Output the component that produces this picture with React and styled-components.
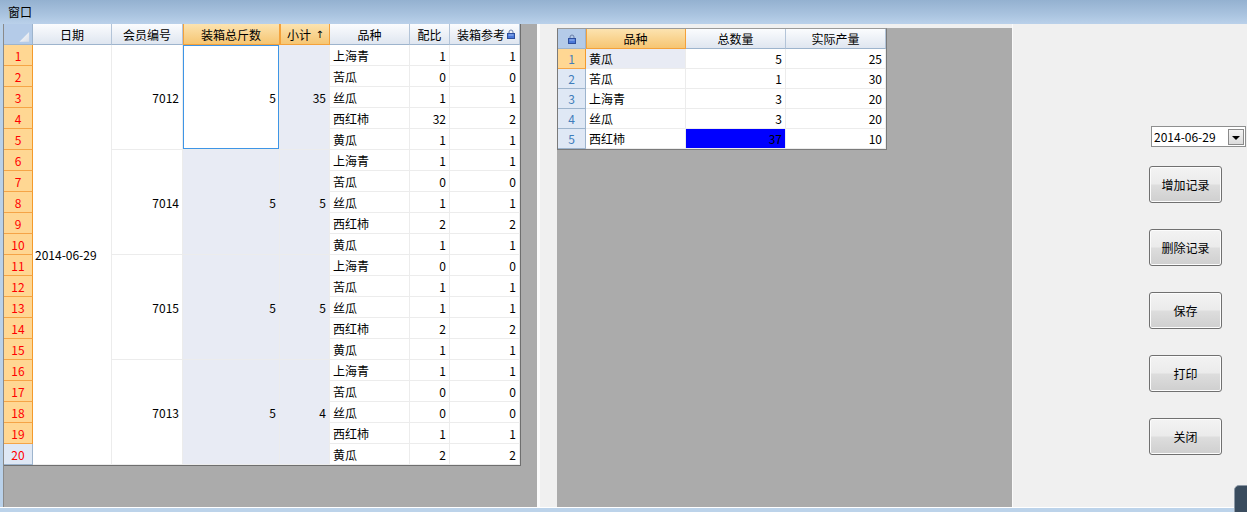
import React from "react";
import styled, { createGlobalStyle } from "styled-components";

const GlobalStyle = createGlobalStyle`
  body {
    margin: 0;
    font-family: "Noto Sans CJK SC", "DejaVu Sans", sans-serif;
    font-size: 12px;
    color: #000;
  }
`;

// data
const groups = [
  { member: "7012", box: 5, sum: 35, rows: [["上海青", 1, 1], ["苦瓜", 0, 0], ["丝瓜", 1, 1], ["西红柿", 32, 2], ["黄瓜", 1, 1]] },
  { member: "7014", box: 5, sum: 5, rows: [["上海青", 1, 1], ["苦瓜", 0, 0], ["丝瓜", 1, 1], ["西红柿", 2, 2], ["黄瓜", 1, 1]] },
  { member: "7015", box: 5, sum: 5, rows: [["上海青", 0, 0], ["苦瓜", 1, 1], ["丝瓜", 1, 1], ["西红柿", 2, 2], ["黄瓜", 1, 1]] },
  { member: "7013", box: 5, sum: 4, rows: [["上海青", 1, 1], ["苦瓜", 0, 0], ["丝瓜", 0, 0], ["西红柿", 1, 1], ["黄瓜", 2, 2]] },
];

const totals = [
  ["黄瓜", 5, 25],
  ["苦瓜", 1, 30],
  ["上海青", 3, 20],
  ["丝瓜", 3, 20],
  ["西红柿", 37, 10],
];

const buttons = ["增加记录", "删除记录", "保存", "打印", "关闭"];

function LockIcon() {
  return (
    <svg width="8" height="10" viewBox="0 0 8 10">
      <path d="M2 4.5V3a2 2 0 0 1 4 0v1.5" fill="none" stroke="#6a7fa8" strokeWidth="1" />
      <rect x="0.5" y="4.5" width="7" height="5" fill="#4a78d8" stroke="#2d4f9e" />
      <rect x="1.5" y="5.5" width="5" height="1" fill="#9fbcf0" />
    </svg>
  );
}

function CornerTriangle() {
  return (
    <svg width="29" height="21" viewBox="0 0 29 21">
      <defs>
        <linearGradient id="tri" x1="0" y1="0" x2="1" y2="1">
          <stop offset="0" stopColor="#ffffff" />
          <stop offset="1" stopColor="#d8dee8" />
        </linearGradient>
      </defs>
      <polygon points="16,18 26,18 26,8" fill="url(#tri)" />
    </svg>
  );
}

export default function App() {
  return (
    <>
      <GlobalStyle />
      <Window>
        <TitleBar>窗口</TitleBar>
        <Body>
          <LeftPane>
            <LeftGrid>
              <Corner $col={1}><CornerTriangle /></Corner>
              <HeadCell $col={2}>日期</HeadCell>
              <HeadCell $col={3}>会员编号</HeadCell>
              <HeadCell $col={4} $active>装箱总斤数</HeadCell>
              <HeadCell $col={5} $active $split>
                <span>小计</span>
                <SortArrow>↑</SortArrow>
              </HeadCell>
              <HeadCell $col={6}>品种</HeadCell>
              <HeadCell $col={7}>配比</HeadCell>
              <HeadCell $col={8} $split>
                <span>装箱参考</span>
                <LockIcon />
              </HeadCell>

              {Array.from({ length: 20 }, (_, i) => (
                <RowHead key={"rh" + i} $row={i + 2} $selected={i < 19}>
                  {i + 1}
                </RowHead>
              ))}

              <Cell $col={2} $row={2} $span={20} $align="left" $pad="0 0 0 2px">
                2014-06-29
              </Cell>

              {groups.map((g, gi) => {
                const start = 2 + gi * 5;
                return (
                  <React.Fragment key={g.member}>
                    <Cell $col={3} $row={start} $span={5}>{g.member}</Cell>
                    <Cell
                      $col={4}
                      $row={start}
                      $span={5}
                      $bg={gi === 0 ? "#fff" : "#e8ebf4"}
                      $focus={gi === 0}
                    >
                      {g.box}
                    </Cell>
                    <Cell $col={5} $row={start} $span={5} $bg="#e8ebf4">{g.sum}</Cell>
                    {g.rows.map((r, ri) => (
                      <React.Fragment key={r[0]}>
                        <Cell $col={6} $row={start + ri} $align="left">{r[0]}</Cell>
                        <Cell $col={7} $row={start + ri}>{r[1]}</Cell>
                        <Cell $col={8} $row={start + ri}>{r[2]}</Cell>
                      </React.Fragment>
                    ))}
                  </React.Fragment>
                );
              })}
            </LeftGrid>
          </LeftPane>

          <Splitter />

          <RightArea>
            <GrayPanel>
              <RightGrid>
                <Corner $col={1}><LockIcon /></Corner>
                <HeadCell $col={2} $active>品种</HeadCell>
                <HeadCell $col={3}>总数量</HeadCell>
                <HeadCell $col={4}>实际产量</HeadCell>
                {totals.map((t, i) => (
                  <React.Fragment key={t[0]}>
                    <RowHead $row={i + 2} $selected={i === 0} $blue>
                      {i + 1}
                    </RowHead>
                    <Cell $col={2} $row={i + 2} $align="left" $bg={i === 0 ? "#e8ebf4" : "#fff"}>
                      {t[0]}
                    </Cell>
                    <Cell $col={3} $row={i + 2} $bg={i === 4 ? "#0000ff" : "#fff"}>
                      {t[1]}
                    </Cell>
                    <Cell $col={4} $row={i + 2}>{t[2]}</Cell>
                  </React.Fragment>
                ))}
              </RightGrid>
            </GrayPanel>
          </RightArea>

          <SidePanel>
            <DatePicker>
              <span>2014-06-29</span>
              <DropButton>
                <Arrow />
              </DropButton>
            </DatePicker>
            {buttons.map((b) => (
              <Button key={b}>{b}</Button>
            ))}
          </SidePanel>
        </Body>
        <BottomStrip />
        <TaskTab />
      </Window>
    </>
  );
}

const Window = styled.div`
  position: relative;
  width: 1247px;
  height: 512px;
  overflow: hidden;
  display: flex;
  flex-direction: column;
  background: #f0f0f0;
`;

const TitleBar = styled.div`
  height: 24px;
  flex: none;
  display: flex;
  align-items: center;
  padding-left: 8px;
  box-sizing: border-box;
  background: linear-gradient(to bottom, #94b1d0, #a9c3df 60%, #bad1ea);
  font-size: 12px;
  line-height: 1;
`;

const Body = styled.div`
  height: 483px;
  flex: none;
  display: flex;
  padding-left: 3px;
  background: #b9d1ea;
`;

const BottomStrip = styled.div`
  flex: 1;
  border-top: 1px solid #ffffff;
  background: #bcd3ea;
`;

const LeftPane = styled.div`
  width: 533px;
  flex: none;
  border-left: 1px solid #8a8a8a;
  background: #ababab;
  display: flex;
  align-items: flex-start;
`;

const Splitter = styled.div`
  width: 3px;
  flex: none;
  background: #fbfbfb;
`;

const RightArea = styled.div`
  width: 472px;
  flex: none;
  display: flex;
  padding: 4px 0 0 17px;
  box-sizing: border-box;
  background: #f0f0f0;
`;

const GrayPanel = styled.div`
  flex: 1;
  background: #ababab;
  display: flex;
  align-items: flex-start;
`;

const LeftGrid = styled.div`
  display: grid;
  grid-template-columns: 29px 79px 71px 97px 50px 80px 40px 70px;
  grid-template-rows: repeat(21, 21px);
  background: #fff;
  border-right: 1px solid #6f6f6f;
  border-bottom: 1px solid #6f6f6f;
`;

const RightGrid = styled.div`
  display: grid;
  grid-template-columns: 28px 100px 100px 100px;
  grid-template-rows: repeat(6, 20px);
  background: #fff;
  border: 1px solid #7a7a7a;
  border-top-color: #9a9a9a;
`;

const HeadCell = styled.div`
  grid-column: ${(p) => p.$col};
  grid-row: 1;
  box-sizing: border-box;
  display: flex;
  align-items: center;
  justify-content: ${(p) => (p.$split ? "space-between" : "center")};
  padding: ${(p) => (p.$split ? "0 4px 0 7px" : "0")};
  white-space: nowrap;
  background: ${(p) =>
    p.$active
      ? "linear-gradient(to bottom, #fce3b0, #f6c572)"
      : "linear-gradient(to bottom, #fbfcfe, #dfe6f0)"};
  border-right: 1px solid ${(p) => (p.$active ? "#f4a13a" : "#b3c4d8")};
  border-bottom: 1px solid ${(p) => (p.$active ? "#f4a13a" : "#9db4cd")};
  box-shadow: ${(p) => (p.$active ? "inset 1px 0 0 #f4a13a" : "none")};
`;

const SortArrow = styled.span`
  font-family: "DejaVu Sans", sans-serif;
  font-size: 10px;
  margin-right: 1px;
`;

const Corner = styled.div`
  grid-column: ${(p) => p.$col};
  grid-row: 1;
  box-sizing: border-box;
  display: flex;
  align-items: center;
  justify-content: center;
  background: #b4cbe8;
  border-right: 1px solid #9db4cd;
  border-bottom: 1px solid #9db4cd;
  svg {
    display: block;
  }
`;

const RowHead = styled.div`
  grid-column: 1;
  grid-row: ${(p) => p.$row};
  box-sizing: border-box;
  display: flex;
  align-items: center;
  justify-content: center;
  color: ${(p) => (p.$blue ? "#3f7dbb" : "#ff0000")};
  background: ${(p) => (p.$selected ? "#ffd793" : "#dfe8f5")};
  border-right: 1px solid ${(p) => (p.$selected ? "#f39a2c" : "#9db4cd")};
  border-bottom: 1px solid ${(p) => (p.$selected ? "#f5a446" : "#9db4cd")};
`;

const Cell = styled.div`
  grid-column: ${(p) => p.$col};
  grid-row: ${(p) => p.$row} / span ${(p) => p.$span || 1};
  box-sizing: border-box;
  display: flex;
  align-items: center;
  justify-content: ${(p) => (p.$align === "left" ? "flex-start" : "flex-end")};
  padding: ${(p) => p.$pad || (p.$align === "left" ? "0 0 0 3px" : "0 3px 0 0")};
  white-space: nowrap;
  background: ${(p) => p.$bg || "#fff"};
  border-right: 1px solid #ececec;
  border-bottom: 1px solid #ececec;
  box-shadow: ${(p) => (p.$focus ? "inset 0 0 0 1px #3e95e6" : "none")};
`;

const SidePanel = styled.div`
  flex: 1;
  display: flex;
  flex-direction: column;
  align-items: flex-start;
  gap: 26px;
  padding: 102px 0 0 136px;
  box-sizing: border-box;
  background: #f0f0f0;
  border-left: 1px solid #fafafa;
`;

const DatePicker = styled.div`
  width: 95px;
  height: 21px;
  margin: 0 0 -7px 2px;
  box-sizing: border-box;
  display: flex;
  align-items: center;
  justify-content: space-between;
  padding: 0 1px 0 2px;
  background: #fff;
  border: 1px solid #8e8f8f;
  font-size: 12px;
`;

const DropButton = styled.div`
  width: 16px;
  height: 16px;
  box-sizing: border-box;
  display: flex;
  align-items: center;
  justify-content: center;
  border: 1px solid #8a8a8a;
  background: linear-gradient(to bottom, #f4f4f4, #dcdcdc);
`;

const Arrow = styled.div`
  width: 0;
  height: 0;
  border-left: 4px solid transparent;
  border-right: 4px solid transparent;
  border-top: 4px solid #000;
  margin-top: 2px;
`;

const Button = styled.div`
  width: 73px;
  height: 37px;
  box-sizing: border-box;
  display: flex;
  align-items: center;
  justify-content: center;
  border: 1px solid #707070;
  border-radius: 3px;
  background: linear-gradient(to bottom, #f3f3f3 0%, #ebebeb 48%, #dddddd 52%, #cfcfcf 100%);
  box-shadow: inset 0 0 0 1px #fcfcfc;
  font-size: 12px;
`;

const TaskTab = styled.div`
  position: absolute;
  left: 1234px;
  top: 485px;
  width: 30px;
  height: 40px;
  border: 1px solid #8d99a6;
  border-radius: 5px 0 0 0;
  background: #3a4c5e;
`;
